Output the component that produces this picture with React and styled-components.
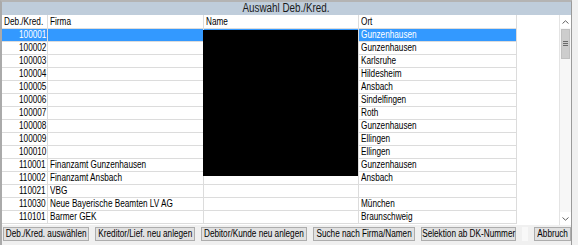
import React from "react";
import styled, { createGlobalStyle } from "styled-components";

const GlobalStyle = createGlobalStyle`
  html, body {
    margin: 0;
    padding: 0;
    background: #f0f0f0;
  }
  body {
    font-family: "Liberation Sans", Arial, sans-serif;
    font-size: 10px;
    color: #000;
  }
  * { box-sizing: border-box; }
`;

const rows = [
  { nr: "100001", firma: "", ort: "Gunzenhausen" },
  { nr: "100002", firma: "", ort: "Gunzenhausen" },
  { nr: "100003", firma: "", ort: "Karlsruhe" },
  { nr: "100004", firma: "", ort: "Hildesheim" },
  { nr: "100005", firma: "", ort: "Ansbach" },
  { nr: "100006", firma: "", ort: "Sindelfingen" },
  { nr: "100007", firma: "", ort: "Roth" },
  { nr: "100008", firma: "", ort: "Gunzenhausen" },
  { nr: "100009", firma: "", ort: "Ellingen" },
  { nr: "100010", firma: "", ort: "Ellingen" },
  { nr: "110001", firma: "Finanzamt Gunzenhausen", ort: "Gunzenhausen" },
  { nr: "110002", firma: "Finanzamt Ansbach", ort: "Ansbach" },
  { nr: "110021", firma: "VBG", ort: "" },
  { nr: "110030", firma: "Neue Bayerische Beamten LV AG", ort: "München" },
  { nr: "110101", firma: "Barmer GEK", ort: "Braunschweig" },
];

const buttons = [
  { label: "Deb./Kred. auswählen", w: 86 },
  { label: "Kreditor/Lief. neu anlegen", w: 100 },
  { label: "Debitor/Kunde neu anlegen", w: 106 },
  { label: "Suche nach Firma/Namen", w: 102 },
  { label: "Selektion ab DK-Nummer", w: 95 },
];

export default function App() {
  return (
    <>
      <GlobalStyle />
      <Window>
        <TitleBar>
          <Txt $origin="center">Auswahl Deb./Kred.</Txt>
        </TitleBar>
        <Main>
          <GridArea>
            <Row $header>
              <Cell><Txt>Deb./Kred.</Txt></Cell>
              <Cell><Txt>Firma</Txt></Cell>
              <Cell><Txt>Name</Txt></Cell>
              <Cell><Txt>Ort</Txt></Cell>
            </Row>
            {rows.map((r, i) => (
              <Row key={r.nr} $selected={i === 0}>
                <Cell $right><Txt $origin="right">{r.nr}</Txt></Cell>
                <Cell><Txt>{r.firma}</Txt></Cell>
                <Cell />
                <Cell><Txt>{r.ort}</Txt></Cell>
              </Row>
            ))}
            {/* geschwärzte Namen */}
            <Redacted />
          </GridArea>
          <ScrollBar>
            <ArrowBtn>
              <svg width="7" height="4" viewBox="0 0 7 4">
                <path d="M0.5 3.5 L3.5 0.8 L6.5 3.5" fill="none" stroke="#606060" strokeWidth="1" />
              </svg>
            </ArrowBtn>
            <Thumb>
              <svg width="5" height="6" viewBox="0 0 5 6">
                <path d="M0 0.5 H5 M0 2.5 H5 M0 4.5 H5" stroke="#6a6a6a" strokeWidth="1" />
              </svg>
            </Thumb>
            <Track />
            <ArrowBtn>
              <svg width="7" height="4" viewBox="0 0 7 4">
                <path d="M0.5 0.5 L3.5 3.2 L6.5 0.5" fill="none" stroke="#606060" strokeWidth="1" />
              </svg>
            </ArrowBtn>
          </ScrollBar>
        </Main>
        <ButtonBar>
          {buttons.map((b) => (
            <Button key={b.label} $w={b.w}>
              <Txt $origin="center">{b.label}</Txt>
            </Button>
          ))}
          <Blank />
          <Button $w={37}>
            <Txt $origin="center">Abbruch</Txt>
          </Button>
        </ButtonBar>
      </Window>
    </>
  );
}

// schmale Systemschrift nachbilden
const Txt = styled.span`
  display: inline-block;
  white-space: nowrap;
  transform: scaleX(0.82);
  transform-origin: ${(p) => p.$origin || "left"} center;
`;

const Window = styled.div`
  width: 572px;
  height: 245px;
  display: flex;
  flex-direction: column;
  background: #f0f0f0;
  border-top: 2px solid #b4b4b4;
  border-left: 2px solid #aaaaaa;
  border-right: 1px solid #9a9a9a;
`;

const TitleBar = styled.div`
  height: 13px;
  display: flex;
  justify-content: center;
  background: #bfcddb;
  color: #1a1a1a;
  font-size: 12px;
  line-height: 13px;
`;

const Main = styled.div`
  display: flex;
  height: 210px;
`;

const GridArea = styled.div`
  position: relative;
  flex: 1;
  background: #fff;
  overflow: hidden;
`;

const Row = styled.div`
  display: grid;
  grid-template-columns: 46px 156px 155px 158px;
  width: 515px;
  height: ${(p) => (p.$header ? 14 : 13)}px;
  border-bottom: 1px solid #dcdcdc;
  background: ${(p) => (p.$selected ? "#3399ff" : "#fff")};
  color: ${(p) => (p.$selected ? "#fff" : "#000")};
  line-height: ${(p) => (p.$header ? 13 : 12)}px;
`;

const Cell = styled.div`
  border-right: 1px solid #dcdcdc;
  padding: 0 ${(p) => (p.$right ? 1 : 0)}px 0 2px;
  text-align: ${(p) => (p.$right ? "right" : "left")};
  white-space: nowrap;
  overflow: hidden;
`;

const Redacted = styled.div`
  position: absolute;
  top: 15px;
  left: 201px;
  width: 155px;
  height: 146px;
  background: #000;
`;

const ScrollBar = styled.div`
  width: 12px;
  display: flex;
  flex-direction: column;
  background: #f7f7f7;
  border-left: 1px solid #e4e4e4;
`;

const ArrowBtn = styled.div`
  height: 13px;
  display: flex;
  align-items: center;
  justify-content: center;
  background: #fff;
`;

const Thumb = styled.div`
  height: 30px;
  margin: 1px 1px 0;
  display: flex;
  align-items: center;
  justify-content: center;
  background: #cdcdcd;
  border: 1px solid #c0c0c0;
`;

const Track = styled.div`
  flex: 1;
`;

const ButtonBar = styled.div`
  display: flex;
  gap: 6px;
  padding: 2px 0 0 1px;
  height: 18px;
`;

const Button = styled.div`
  width: ${(p) => p.$w}px;
  height: 14px;
  display: flex;
  justify-content: center;
  background: #e1e1e1;
  border: 1px solid #adadad;
  font-size: 10px;
  line-height: 12px;
`;

const Blank = styled.div`
  width: 14px;
  height: 14px;
  margin-left: auto;
  background: #f8f8f8;
`;
